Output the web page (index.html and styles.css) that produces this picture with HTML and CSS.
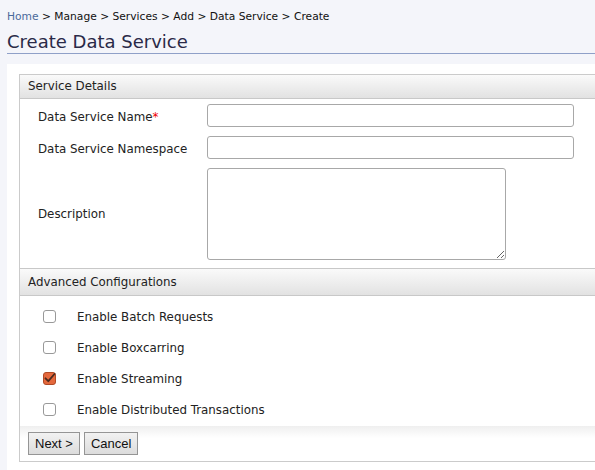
FILE: index.html
```html
<!DOCTYPE html>
<html>
<head>
<meta charset="utf-8">
<link rel="stylesheet" href="styles.css">
</head>
<body>
<div class="breadcrumb"><a class="crumb-link" href="#">Home</a> &gt; Manage &gt; Services &gt; Add &gt; Data Service &gt; Create</div>
<h1 class="title">Create Data Service</h1>
<div class="content">
  <div class="box">
    <div class="section-head">Service Details</div>
    <div class="fields">
      <label class="field-label field-label-low">Data Service Name<span class="req">*</span></label>
      <input class="text-input" type="text">
      <label class="field-label field-label-low">Data Service Namespace</label>
      <input class="text-input" type="text">
      <label class="field-label">Description</label>
      <textarea class="text-area"></textarea>
    </div>
    <div class="section-head section-head-2">Advanced Configurations</div>
    <div class="checks">
      <div class="check-row"><span class="cb"></span><span class="check-label">Enable Batch Requests</span></div>
      <div class="check-row"><span class="cb"></span><span class="check-label">Enable Boxcarring</span></div>
      <div class="check-row"><span class="cb cb-on"><svg width="13" height="13" viewBox="0 0 13 13"><path d="M2.5 6.3 L5.3 9.2 L11.5 2" fill="none" stroke="#4a2a1e" stroke-width="1.8" stroke-linecap="round" stroke-linejoin="round"/></svg></span><span class="check-label">Enable Streaming</span></div>
      <div class="check-row"><span class="cb"></span><span class="check-label">Enable Distributed Transactions</span></div>
    </div>
    <div class="buttons">
      <button class="btn">Next &gt;</button>
      <button class="btn">Cancel</button>
    </div>
  </div>
</div>
</body>
</html>
```
FILE: styles.css
```css
html { overflow: hidden; }
body {
  margin: 0;
  background: #f4f5fa;
  font-family: "DejaVu Sans", sans-serif;
  font-size: 11.85px;
  color: #222;
  width: 620px;
}
.breadcrumb {
  padding: 10px 7px 0;
  font-size: 10.7px;
  line-height: 13px;
  color: #111;
}
.crumb-link { color: #4a6a9a; text-decoration: none; }
.title {
  margin: 8px 0 0 7px;
  font-size: 18px;
  font-weight: normal;
  color: #2a2a48;
  line-height: 22px;
  padding-bottom: 0;
  border-bottom: 1px solid #8fa0c8;
}
.content {
  margin: 10px 0 0 7px;
  background: #fff;
  padding: 10px 0 8px 12px;
  height: 420px;
}
.box {
  border: 1px solid #cbcbcb;
  border-right: none;
}
.section-head {
  height: 23px;
  line-height: 23px;
  padding-left: 8px;
  background: linear-gradient(#fafafa, #e2e2e2);
  border-bottom: 1px solid #c8c8c8;
  color: #222;
}
.section-head-2 {
  border-top: 1px solid #c8c8c8;
  height: 26px;
  line-height: 26px;
}
.fields {
  display: grid;
  grid-template-columns: 169px 367px;
  row-gap: 9px;
  padding: 5px 0 8px 18px;
  align-items: center;
}
.field-label { color: #222; }
.field-label-low { padding-top: 3px; }
.req { color: #e00; }
.text-input, .text-area {
  box-sizing: border-box;
  border: 1px solid #a8a8a8;
  border-radius: 3px;
  background: #fff;
  margin: 0;
  font: inherit;
}
.text-input { height: 23px; width: 367px; }
.text-area { height: 92px; width: 299px; resize: both; }
.checks {
  padding: 5px 0 1px 23px;
}
.check-row {
  display: flex;
  align-items: center;
  height: 31px;
}
.cb {
  box-sizing: border-box;
  width: 13px;
  height: 13px;
  border: 1px solid #999;
  border-radius: 3px;
  background: #fff;
  margin-right: 21px;
  display: inline-flex;
}
.cb-on {
  background: #e4683c;
  border-color: #b04a26;
}
.cb-on svg { margin: -1px; }
.check-label { color: #222; }
.buttons {
  padding: 6px 0 6px 8px;
  background: linear-gradient(#efefef, #fff 12px);
  display: flex;
  gap: 4px;
}
.btn {
  font-family: "Liberation Sans", Arial, sans-serif;
  font-size: 13px;
  height: 23px;
  padding: 0 6px;
  border: 1px solid #959595;
  border-radius: 0;
  background: linear-gradient(#f2f2f2, #dcdcdc);
  color: #111;
}
```
